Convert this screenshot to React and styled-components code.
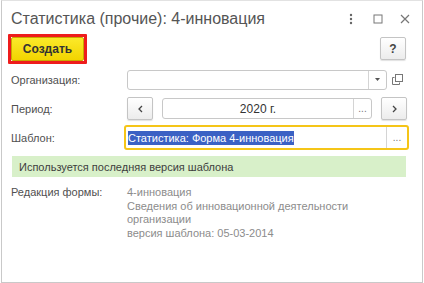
import React from 'react'
import styled, { createGlobalStyle } from 'styled-components'

const Global = createGlobalStyle`
  html, body {
    margin: 0;
    padding: 0;
    background: #fff;
  }
  body {
    font-family: "Liberation Sans", Arial, sans-serif;
    font-size: 11px;
    color: #4a4a4a;
  }
`

const Window = styled.div`
  box-sizing: border-box;
  width: 422px;
  height: 283px;
  margin-left: 1px;
  border: 1px solid #c9c9c9;
  border-top-color: #e2e2e2;
  background: #fff;
`

const TitleBar = styled.div`
  display: flex;
  align-items: center;
  height: 32px;
  padding: 0 4px 0 9px;
`

const Title = styled.div`
  flex: 1;
  font-size: 16px;
  color: #555;
  padding-top: 3px;
`

const WinButtons = styled.div`
  display: flex;
  align-items: center;
  padding-top: 3px;
`

const WinBtn = styled.div`
  width: 27px;
  height: 20px;
  display: flex;
  align-items: center;
  justify-content: center;
`

const Toolbar = styled.div`
  display: flex;
  justify-content: space-between;
  align-items: center;
  padding: 0 16px 0 6px;
  height: 31px;
`

const Highlight = styled.div`
  border: 3px solid #ee1c1c;
  border-radius: 1px;
`

const CreateButton = styled.button`
  display: block;
  width: 73px;
  height: 24px;
  border: 1px solid #c9a800;
  border-radius: 2px;
  background: linear-gradient(#fbe92a, #f2d400);
  font-family: "Liberation Sans", Arial, sans-serif;
  font-size: 12px;
  font-weight: bold;
  color: #333;
  padding: 0;
`

const SmallButton = styled.button`
  box-sizing: border-box;
  width: ${p => p.$w || 26}px;
  height: 23px;
  border: 1px solid #c4c4c4;
  border-radius: 2px;
  background: linear-gradient(#fff, #ececec);
  box-shadow: 0 1px 1px rgba(0, 0, 0, 0.12);
  font-family: "Liberation Sans", Arial, sans-serif;
  font-size: 12px;
  font-weight: ${p => (p.$bold ? 'bold' : 'normal')};
  color: #444;
  padding: 0;
  display: flex;
  align-items: center;
  justify-content: center;
`

const Form = styled.div`
  display: grid;
  grid-template-columns: 116px 1fr;
  grid-auto-rows: 29px;
  align-items: center;
  padding: 1px 15px 0 9px;
`

const Label = styled.div`
  color: #505050;
`

const Field = styled.div`
  box-sizing: border-box;
  display: flex;
  align-items: stretch;
  flex: 1;
  height: ${p => p.$h || 20}px;
  margin: ${p => p.$margin || 0};
  border: ${p => (p.$active ? '2px solid #f5c518' : '1px solid #c8c8c8')};
  border-radius: 3px;
  background: #fff;
`

const FieldText = styled.div`
  flex: 1;
  display: flex;
  align-items: center;
  justify-content: ${p => (p.$center ? 'center' : 'flex-start')};
  padding: 0 2px;
  color: #333;
  font-size: ${p => (p.$large ? 12 : 11)}px;
  white-space: nowrap;
  overflow: hidden;
`

const Selected = styled.span`
  background: #3b61c4;
  color: #fff;
  padding: 1px 0;
`

const FieldBtn = styled.div`
  width: ${p => p.$w || 17}px;
  border-left: 1px solid #d4d4d4;
  display: flex;
  align-items: center;
  justify-content: center;
  color: #777;
  font-size: 10px;
`

const Line = styled.div`
  display: flex;
  align-items: center;
  gap: ${p => p.$gap || 0}px;
`

const OpenIcon = styled.div`
  width: 20px;
  display: flex;
  justify-content: center;
`

const Notice = styled.div`
  margin: 4px 16px 0 10px;
  height: 21px;
  background: #d8f0c9;
  display: flex;
  align-items: center;
  padding-left: 7px;
  color: #3d3d3d;
`

const Info = styled.div`
  display: grid;
  grid-template-columns: 116px 1fr;
  padding: 9px 15px 0 9px;
  line-height: 13.5px;
`

const InfoValue = styled.div`
  color: #8c8c8c;
`

const MoreIcon = () => (
  <svg width="4" height="12" viewBox="0 0 4 12">
    <circle cx="2" cy="2" r="1.2" fill="#666" />
    <circle cx="2" cy="6" r="1.2" fill="#666" />
    <circle cx="2" cy="10" r="1.2" fill="#666" />
  </svg>
)

const MaxIcon = () => (
  <svg width="10" height="10" viewBox="0 0 10 10">
    <rect x="1" y="1" width="8" height="8" fill="none" stroke="#777" strokeWidth="1" />
  </svg>
)

const CloseIcon = () => (
  <svg width="10" height="10" viewBox="0 0 10 10">
    <path d="M1 1 L9 9 M9 1 L1 9" stroke="#777" strokeWidth="1.2" />
  </svg>
)

const Copy = () => (
  <svg width="11" height="11" viewBox="0 0 11 11">
    <rect x="3.5" y="0.5" width="7" height="7" fill="none" stroke="#777" />
    <path d="M2.5 3.5 H0.5 V10.5 H7.5 V8.5" fill="none" stroke="#777" />
  </svg>
)

const Caret = () => (
  <svg width="5" height="3" viewBox="0 0 5 3">
    <path d="M0 0 H5 L2.5 3 Z" fill="#555" />
  </svg>
)

const Chevron = ({ dir }) => (
  <svg width="5" height="8" viewBox="0 0 5 8">
    <path
      d={dir === 'left' ? 'M4 1 L1 4 L4 7' : 'M1 1 L4 4 L1 7'}
      fill="none"
      stroke="#444"
      strokeWidth="1.3"
    />
  </svg>
)

const App = () => {
  return (
    <>
      <Global />
      <Window>
        <TitleBar>
          <Title>Статистика (прочие): 4-инновация</Title>
          <WinButtons>
            <WinBtn><MoreIcon /></WinBtn>
            <WinBtn><MaxIcon /></WinBtn>
            <WinBtn><CloseIcon /></WinBtn>
          </WinButtons>
        </TitleBar>

        <Toolbar>
          <Highlight>
            <CreateButton>Создать</CreateButton>
          </Highlight>
          <SmallButton $bold>?</SmallButton>
        </Toolbar>

        <Form>
          <Label>Организация:</Label>
          <Line>
            <Field>
              <FieldText />
              <FieldBtn><Caret /></FieldBtn>
            </Field>
            <OpenIcon><Copy /></OpenIcon>
          </Line>

          <Label>Период:</Label>
          <Line $gap={9}>
            <SmallButton><Chevron dir="left" /></SmallButton>
            <Field $h={21}>
              <FieldText $center $large>2020 г.</FieldText>
              <FieldBtn>...</FieldBtn>
            </Field>
            <SmallButton><Chevron dir="right" /></SmallButton>
          </Line>

          <Label>Шаблон:</Label>
          <Line>
            <Field $h={25} $active $margin="0 -2px 0 -3px">
              <FieldText>
                <Selected>Статистика: Форма 4-инновация</Selected>
              </FieldText>
              <FieldBtn $w={20}>...</FieldBtn>
            </Field>
          </Line>
        </Form>

        <Notice>Используется последняя версия шаблона</Notice>

        <Info>
          <Label>Редакция формы:</Label>
          <InfoValue>
            4-инновация
            <br />
            Сведения об инновационной деятельности
            <br />
            организации
            <br />
            версия шаблона: 05-03-2014
          </InfoValue>
        </Info>
      </Window>
    </>
  )
}

export default App
